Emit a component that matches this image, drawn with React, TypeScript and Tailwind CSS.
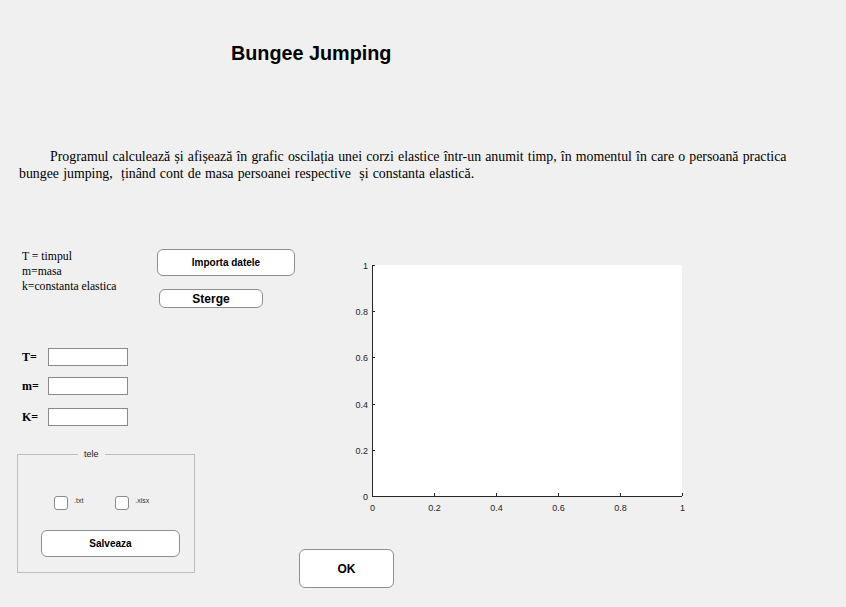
import React from "react";

const serif = "font-['Liberation_Serif']";
const sans = "font-['Liberation_Sans',Arial,sans-serif]";

function Axes() {
  // plot box in svg coords
  const L = 28;
  const R = 338;
  const T = 7;
  const B = 238;
  const ticks = [0, 0.2, 0.4, 0.6, 0.8, 1];
  const label = (v: number) => (v === 0 || v === 1 ? String(v) : v.toFixed(1));

  return (
    <svg width="346" height="257" viewBox="0 0 346 257" className="block">
      <rect x={L} y={T} width={R - L} height={B - T} fill="#ffffff" />
      <line x1={L + 0.5} y1={T} x2={L + 0.5} y2={B + 0.5} stroke="#262626" strokeWidth="1" />
      <line x1={L} y1={B + 0.5} x2={R} y2={B + 0.5} stroke="#262626" strokeWidth="1" />
      {ticks.map((t) => {
        const x = Math.round(L + t * (R - L)) + 0.5;
        const y = Math.round(B - t * (B - T)) + 0.5;
        return (
          <g key={t}>
            <line x1={x} y1={B} x2={x} y2={B - 3} stroke="#262626" strokeWidth="1" />
            <line x1={L} y1={y} x2={L + 3} y2={y} stroke="#262626" strokeWidth="1" />
            <text
              x={L - 4}
              y={y + 3}
              textAnchor="end"
              fontSize="9"
              fill="#262626"
              fontFamily="Liberation Sans, Arial, sans-serif"
            >
              {label(t)}
            </text>
            <text
              x={x}
              y={B + 15}
              textAnchor="middle"
              fontSize="9"
              fill="#262626"
              fontFamily="Liberation Sans, Arial, sans-serif"
            >
              {label(t)}
            </text>
          </g>
        );
      })}
    </svg>
  );
}

function Field({ label, className = "" }: { label: string; className?: string }) {
  return (
    <div className={`flex items-center h-[18px] ${className}`}>
      <span className={`ml-[22px] w-[26px] text-[12px] font-bold text-black ${serif}`}>{label}</span>
      <input className="w-[80px] h-[18px] bg-white border border-[#8a8a8a] outline-none" />
    </div>
  );
}

function Check({ label }: { label: string }) {
  return (
    <div className="flex items-center gap-[6px]">
      <span className="w-[14px] h-[14px] bg-white border border-[#8a8a8a] rounded-[3px]" />
      <span className="text-[7px] text-[#333] mt-[-4px]">{label}</span>
    </div>
  );
}

export default function App() {
  return (
    <div className={`w-[846px] h-[607px] bg-[#f0f0f0] overflow-hidden flex flex-col text-black ${sans}`}>
      <h1 className="pt-[40px] pl-[231px] text-[19.8px] leading-[26px] font-bold">Bungee Jumping</h1>

      <p className={`mt-[82px] pl-[19px] indent-[31px] text-[13.85px] leading-[17px] [word-spacing:0.7px] whitespace-pre ${serif}`}>
        Programul calculează și afișează în grafic oscilația unei corzi elastice într-un anumit timp, în momentul în care o persoană practica
        <br />
        bungee jumping,  ținând cont de masa persoanei respective  și constanta elastică.
      </p>

      <div className="mt-[67px] flex">
        {/* left controls */}
        <div className="w-[299px] shrink-0 flex flex-col">
          <div className="flex">
            <div className={`ml-[22px] w-[135px] text-[11.7px] leading-[15px] ${serif}`}>
              <div>T = timpul</div>
              <div>m=masa</div>
              <div>k=constanta elastica</div>
            </div>
            <div className="flex flex-col">
              <button className="w-[138px] h-[27px] bg-white border border-[#8f8f8f] rounded-[6px] text-[10px] font-bold">
                Importa datele
              </button>
              <button className="mt-[13px] ml-[2px] w-[104px] h-[19px] bg-white border border-[#8f8f8f] rounded-[6px] text-[12px] font-bold leading-none">
                Sterge
              </button>
            </div>
          </div>

          <Field label="T=" className="mt-[40px]" />
          <Field label="m=" className="mt-[11px]" />
          <Field label="K=" className="mt-[13px]" />

          <fieldset className="mt-[23px] ml-[17px] w-[178px] min-w-0 h-[124px] border border-[#bdbdbd] pl-[23px] pr-0 pb-0">
            <legend className="ml-[37px] px-[6px] text-[9px] text-[#222] leading-[10px]">tele</legend>
            <div className="flex gap-[32px] mt-[37px] ml-[13px]">
              <Check label=".txt" />
              <Check label=".xlsx" />
            </div>
            <button className="mt-[20px] w-[139px] h-[27px] bg-white border border-[#8f8f8f] rounded-[6px] text-[10px] font-bold">
              Salveaza
            </button>
          </fieldset>
        </div>

        {/* chart and OK */}
        <div className="flex flex-col">
          <div className="mt-[9px] ml-[45px]">
            <Axes />
          </div>
          <button className="mt-[34px] w-[95px] h-[39px] bg-white border border-[#8f8f8f] rounded-[6px] text-[12px] font-bold">
            OK
          </button>
        </div>
      </div>
    </div>
  );
}
